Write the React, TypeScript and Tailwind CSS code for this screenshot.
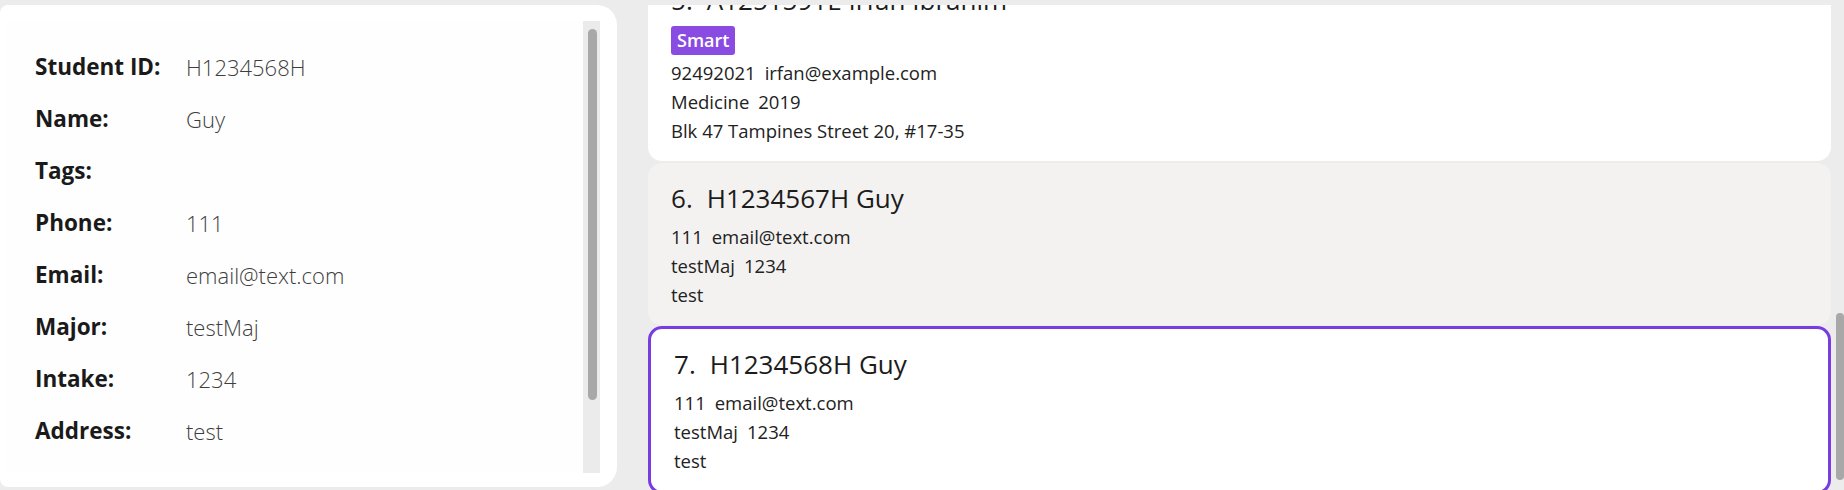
import React from 'react';

type Person = {
    index: number;
    id: string;
    name: string;
    tags: string[];
    phone: string;
    email: string;
    major: string;
    intake: string;
    address: string;
};

const people: Person[] = [
    {
        index: 5,
        id: 'A1251591E',
        name: 'Irfan Ibrahim',
        tags: ['Smart'],
        phone: '92492021',
        email: 'irfan@example.com',
        major: 'Medicine',
        intake: '2019',
        address: 'Blk 47 Tampines Street 20, #17-35',
    },
    {
        index: 6,
        id: 'H1234567H',
        name: 'Guy',
        tags: [],
        phone: '111',
        email: 'email@text.com',
        major: 'testMaj',
        intake: '1234',
        address: 'test',
    },
    {
        index: 7,
        id: 'H1234568H',
        name: 'Guy',
        tags: [],
        phone: '111',
        email: 'email@text.com',
        major: 'testMaj',
        intake: '1234',
        address: 'test',
    },
];

const details: [string, string][] = [
    ['Student ID:', 'H1234568H'],
    ['Name:', 'Guy'],
    ['Tags:', ''],
    ['Phone:', '111'],
    ['Email:', 'email@text.com'],
    ['Major:', 'testMaj'],
    ['Intake:', '1234'],
    ['Address:', 'test'],
];

const PersonCard: React.FC<{ person: Person; variant: 'white' | 'grey' | 'selected'; className?: string }> = ({ person, variant, className }) => {
    const look =
        variant === 'selected'
            ? 'bg-white border-[3px] border-[#7a3be0] pl-[23px]'
            : variant === 'grey'
            ? 'bg-[#f3f2f1] pl-[23px]'
            : 'bg-white pl-[23px]';
    const hasTags = person.tags.length > 0;
    return (
        <div className={`rounded-[14px] pt-[18px] pb-[16px] ${look} ${className ?? ''}`}>
            <div className="flex items-center h-[34px] text-[26px] font-medium text-[#1c1c1c]">
                <span>{person.index}.</span>
                <span className="ml-[14px]">{person.id} {person.name}</span>
            </div>
            {hasTags && (
                <div className="flex gap-2 mt-[9px]">
                    {person.tags.map((t) => (
                        <span key={t} className="h-[29px] px-[6px] flex items-center rounded-[3px] bg-[#8a4be2] text-white text-[18px] font-semibold">
                            {t}
                        </span>
                    ))}
                </div>
            )}
            <div className={`${hasTags ? 'mt-[3px]' : 'mt-[7px]'} text-[18.5px] leading-[29px] text-[#222]`}>
                <div className="flex gap-[9px]">
                    <span>{person.phone}</span>
                    <span>{person.email}</span>
                </div>
                <div className="flex gap-[9px]">
                    <span>{person.major}</span>
                    <span>{person.intake}</span>
                </div>
                <div>{person.address}</div>
            </div>
        </div>
    );
};

const App: React.FC = () => {
    return (
        <div
            className="w-[1844px] h-[490px] bg-[#ececec] flex overflow-hidden"
            style={{ fontFamily: '"Open Sans", "Noto Sans", sans-serif' }}
        >
            {/* detail panel */}
            <div className="w-[617px] h-[482px] mt-[5px] bg-white rounded-r-[20px] rounded-l-[8px] pl-[5px] pt-[16px] pr-[17px] shrink-0">
                <div className="flex h-[452px]">
                    <div className="flex-1 bg-[#fefefe] pl-[30px] pt-[20px]">
                        {details.map(([label, value]) => (
                            <div key={label} className="grid grid-cols-[151px_1fr] items-center h-[52px] text-[22px]">
                                <span className="font-bold text-[22.5px] text-[#1a1a1a]">{label}</span>
                                <span className="font-light text-[#3e3e3e]">{value}</span>
                            </div>
                        ))}
                    </div>
                    <div className="w-[17px] bg-[#ebebeb] pt-[8px] pl-[5px]">
                        <div className="w-[9px] h-[371px] rounded-full bg-[#a8a8a8]" />
                    </div>
                </div>
            </div>

            {/* person list */}
            <div className="ml-[31px] flex flex-1 h-[485px] mt-[5px] overflow-hidden">
                <div className="w-[1183px] flex flex-col">
                    <PersonCard person={people[0]} variant="white" className="-mt-[40px]" />
                    <PersonCard person={people[1]} variant="grey" className="mt-[2px]" />
                    <PersonCard person={people[2]} variant="selected" className="mt-[1px]" />
                </div>
                <div className="flex-1 pl-[5px] pt-[308px]">
                    <div className="w-[8px] h-[167px] rounded-full bg-[#a8a8a8]" />
                </div>
            </div>
        </div>
    );
};

export default App;
